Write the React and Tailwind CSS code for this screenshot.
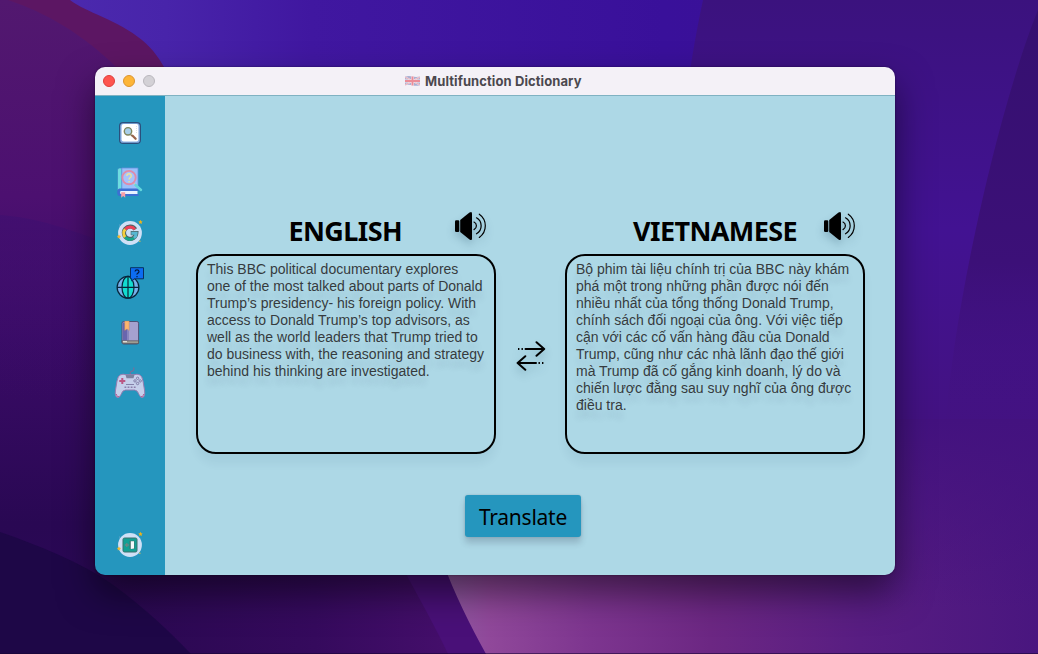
import React from "react";

const ENGLISH = [
  "This BBC political documentary explores",
  "one of the most talked about parts of Donald",
  "Trump’s presidency- his foreign policy. With",
  "access to Donald Trump’s top advisors, as",
  "well as the world leaders that Trump tried to",
  "do business with, the reasoning and strategy",
  "behind his thinking are investigated.",
];

const VIETNAMESE = [
  "Bộ phim tài liệu chính trị của BBC này khám",
  "phá một trong những phần được nói đến",
  "nhiều nhất của tổng thống Donald Trump,",
  "chính sách đối ngoại của ông. Với việc tiếp",
  "cận với các cố vấn hàng đầu của Donald",
  "Trump, cũng như các nhà lãnh đạo thế giới",
  "mà Trump đã cố gắng kinh doanh, lý do và",
  "chiến lược đằng sau suy nghĩ của ông được",
  "điều tra.",
];

function Wallpaper() {
  return (
    <svg className="absolute inset-0" width="1038" height="654" viewBox="0 0 1038 654" aria-hidden="true">
      <defs>
        <linearGradient id="sky" x1="0" y1="0" x2="1" y2="0">
          <stop offset="0" stopColor="#4d2cb0" />
          <stop offset="0.16" stopColor="#4824aa" />
          <stop offset="0.3" stopColor="#4017a0" />
          <stop offset="0.64" stopColor="#39109a" />
          <stop offset="1" stopColor="#3c1190" />
        </linearGradient>
        <linearGradient id="right" x1="0" y1="0" x2="0" y2="1">
          <stop offset="0" stopColor="#3b127e" />
          <stop offset="0.35" stopColor="#421292" />
          <stop offset="0.7" stopColor="#43127f" />
          <stop offset="1" stopColor="#49167c" />
        </linearGradient>
        <linearGradient id="edge" x1="0" y1="0" x2="0" y2="1">
          <stop offset="0" stopColor="#351070" />
          <stop offset="0.6" stopColor="#3c1078" />
          <stop offset="1" stopColor="#43127f" stopOpacity="0" />
        </linearGradient>
        <linearGradient id="left" x1="0" y1="0" x2="0" y2="1">
          <stop offset="0" stopColor="#52186f" />
          <stop offset="0.3" stopColor="#4c1070" />
          <stop offset="0.52" stopColor="#3a0b66" />
          <stop offset="0.8" stopColor="#290853" />
          <stop offset="1" stopColor="#2c0858" />
        </linearGradient>
        <linearGradient id="leftFold" x1="0" y1="0" x2="0" y2="1">
          <stop offset="0" stopColor="#3b0f70" stopOpacity="0.5" />
          <stop offset="1" stopColor="#3b0f70" stopOpacity="0" />
        </linearGradient>
        <linearGradient id="floor" x1="0" y1="0" x2="1" y2="0">
          <stop offset="0" stopColor="#28084f" />
          <stop offset="0.55" stopColor="#350a5d" />
          <stop offset="1" stopColor="#4a1070" />
        </linearGradient>
        <linearGradient id="pink" x1="0" y1="0" x2="1" y2="0">
          <stop offset="0" stopColor="#8f5aa2" />
          <stop offset="0.08" stopColor="#90489a" />
          <stop offset="0.25" stopColor="#7d358f" />
          <stop offset="0.45" stopColor="#6c2783" />
          <stop offset="0.7" stopColor="#581d82" />
          <stop offset="1" stopColor="#49167f" />
        </linearGradient>
        <linearGradient id="pinkFade" x1="0" y1="0" x2="0" y2="1">
          <stop offset="0" stopColor="#43127f" stopOpacity="1" />
          <stop offset="1" stopColor="#43127f" stopOpacity="0" />
        </linearGradient>
      </defs>
      <rect width="1038" height="654" fill="url(#sky)" />
      <path d="M703 0H1038V654H640C660 400 670 150 703 0Z" fill="url(#right)" />
      <path d="M1038 10V430H945C955 290 1005 90 1038 10Z" fill="url(#edge)" />
      <path d="M0 0H70C85 12 118 20 142 40C154 50 160 60 164 67V300H0Z" fill="#5c1663" />
      <path d="M0 0H8C45 12 84 35 116 67L300 280V654H0Z" fill="url(#left)" />
      <path d="M0 215C40 218 70 230 110 244V400H0Z" fill="url(#leftFold)" />
      <rect x="95" y="540" width="400" height="114" fill="url(#floor)" />
      <path d="M404 570C420 600 436 628 448 654H500V560Z" fill="#491078" />
      <path d="M0 532C40 546 80 562 112 584C145 608 170 632 191 654H0Z" fill="#1e0747" />
      <path d="M442 560C455 595 470 625 486 654H1038V420H880V560Z" fill="url(#pink)" />
      <rect x="880" y="419" width="158" height="190" fill="url(#pinkFade)" />
      <rect y="653" width="1038" height="1" fill="#160633" opacity="0.55" />
    </svg>
  );
}

function Flag() {
  return (
    <svg width="15" height="10" viewBox="0 0 15 10" className="opacity-60" aria-hidden="true">
      <path d="M0 .5Q4 -.4 7.500 .5T15 .5V9.300Q11 10.300 7.500 9.300T0 9.300Z" fill="#7a82b8" />
      <path d="M0 1 15 9M15 1 0 9" stroke="#efe6f0" strokeWidth="1.500" />
      <path d="M0 1 15 9M15 1 0 9" stroke="#e0606c" strokeWidth="0.800" />
      <path d="M7.500 0.300V9.700M0 5H15" stroke="#f6e3ea" strokeWidth="2.800" />
      <path d="M7.500 .5V9.500M0 5H15" stroke="#e64a58" strokeWidth="1.900" />
    </svg>
  );
}

function Icon({ children }) {
  return (
    <svg width="36" height="36" viewBox="0 0 36 36" fill="none" aria-hidden="true">
      {children}
    </svg>
  );
}

const Sparkles = () => (
  <>
    <path d="m28.500 4.800 .7 1.400 1.500.2-1.100 1.100.3 1.500-1.400-.7-1.400.7.3-1.500-1.100-1.100 1.500-.2Z" fill="#f0b416" />
    <path d="m7 19.500.7 1.300 1.400.2-1 1 .2 1.400-1.300-.7-1.300.7.2-1.400-1-1 1.400-.2Z" fill="#f4b92c" />
    <circle cx="27.800" cy="26.300" r="0.800" fill="#d9bb4a" />
    <circle cx="7.500" cy="10" r="0.600" fill="#6fa8cf" />
  </>
);

const SearchIcon = () => (
  <Icon>
    <rect x="7.600" y="7.600" width="20.800" height="20.800" rx="3.500" fill="#8bb0e4" stroke="#2a4f7c" strokeWidth="1.200" />
    <rect x="9.600" y="9" width="16.800" height="17.400" rx="2" fill="#fff" />
    <path d="m18.500 19.500 2 1.700" stroke="#7d7254" strokeWidth="1.300" />
    <path d="m20.600 20.800 3 3" stroke="#99654d" strokeWidth="2.300" strokeLinecap="round" />
    <circle cx="16" cy="16.300" r="3.700" fill="#a8cfe9" stroke="#808760" strokeWidth="1.400" />
    <path d="M24.500 11v7" stroke="#d8dfe9" strokeDasharray="1 1" />
  </Icon>
);

const BookSearchIcon = () => (
  <Icon>
    <path d="M5.500 5Q5.500 3 7.500 3H10V25H5.500Z" fill="#6ddde0" stroke="#398bc2" strokeWidth="0.700" />
    <path d="M9.800 3H26V25H9.800Z" fill="#9bc0fa" stroke="#638fdc" strokeWidth="0.800" />
    <path d="M7.500 23.500H26.500V26H8Q7 28 8.500 29H26.500V31H8Q5.200 31 5.200 27.500T7.500 23.500Z" fill="#3d6fd3" />
    <path d="M8.500 26H25.500V29H8.500Q7.500 27.500 8.500 26Z" fill="#e8f1ff" />
    <path d="M9.200 27.300h4V32.800l-2-1.700-2 1.700Z" fill="#f79fa8" />
    <path d="m21.500 18 2 2" stroke="#d9cbad" strokeWidth="1.500" />
    <path d="m23.500 20 5.500 5" stroke="#62d6dc" strokeWidth="2.500" strokeLinecap="round" />
    <circle cx="17" cy="12.600" r="6.700" fill="#a7c3fb" stroke="#df8bab" strokeWidth="1.900" />
    <path d="M14.800 11Q15 8.800 17 8.800T19.300 11Q19.300 12 18.200 12.600T17.100 14.600M17.100 16v1.200" stroke="#e8e39d" strokeWidth="1.400" />
  </Icon>
);

const GoogleIcon = () => (
  <Icon>
    <circle cx="18" cy="18" r="11.900" fill="#cfe0f6" />
    <path d="M23.300 14.300A6.200 6.200 0 1 0 24.300 18.200H18.700" stroke="#4c6468" strokeWidth="4.200" />
    <g strokeWidth="2.900">
      <path d="M22.900 14.500A6.200 6.200 0 0 0 13.200 14.200" stroke="#ed4058" />
      <path d="M13.200 14.200A6.200 6.200 0 0 0 13.200 22.200" stroke="#f6cf3d" />
      <path d="M13.200 22.200A6.200 6.200 0 0 0 22 23" stroke="#16a58b" />
      <path d="M19.300 18.200H24.200A6.200 6.200 0 0 1 22 23" stroke="#57b7d2" />
    </g>
    <Sparkles />
  </Icon>
);

const GlobeIcon = () => (
  <Icon>
    <circle cx="16" cy="22.300" r="10.900" fill="#76b0ea" />
    <ellipse cx="16" cy="22.300" rx="6" ry="10.900" fill="#12dcd0" />
    <g stroke="#08263b" strokeWidth="1.200">
      <circle cx="16" cy="22.300" r="10.900" />
      <ellipse cx="16" cy="22.300" rx="6" ry="10.900" />
      <path d="M16 11.500v21.600M5 22.300h22" />
    </g>
    <path d="M18.500 2.700H31.500V13.800H22.200L19.700 16V13.800H18.500Z" fill="#0c6cf2" stroke="#083060" strokeWidth="1" />
    <path d="M23 6.500Q23.200 4.800 25 4.800T27 6.500Q27 7.600 25.900 8.100T25 9.600M25 11v1.200" stroke="#041a3d" strokeWidth="1.200" />
  </Icon>
);

const BookIcon = () => (
  <Icon>
    <rect x="10" y="6.500" width="16.600" height="22.500" rx="1.700" fill="#a5a1cf" stroke="#4b4a6c" strokeWidth="0.900" />
    <path d="M10.800 7.500H15.500V25.500H10.800Z" fill="#6865ae" />
    <path d="M15.500 15.500V25.500H17V15.500Z" fill="#8885bf" />
    <path d="M10 25.800H26.500V28.500H12Q10 28.500 10 27Z" fill="#9e9d94" stroke="#555458" strokeWidth="0.700" />
    <path d="M11 26.700h4" stroke="#f3efe6" strokeWidth="1" />
    <path d="M12.700 6.100H17.200V15.500L15 14 12.700 15.500Z" fill="#fdb56e" stroke="#b18067" strokeWidth="0.400" />
  </Icon>
);

const GamepadIcon = () => (
  <Icon>
    <path d="M18.300 10V7.500Q18.300 6.300 20 6.200T21.800 4.500V2.500" stroke="#95628f" strokeWidth="0.900" />
    <path d="M8 10Q11 8.500 14 9.700H22Q25 8.500 28 10Q30 11 31 16L32.500 25Q33.500 32 30.500 32.500Q28.500 33 27 29.500Q25.500 25 22.500 25H13.500Q10.500 25 9 29.500Q7.500 33 5.500 32.500Q2.500 32 3.500 25L5 16Q6 11 8 10Z" fill="#c5cfeb" stroke="#967eb2" strokeWidth="1" />
    <path d="M13.500 9.800H22.500L21.500 13.300H14.500Z" fill="#7b819f" />
    <path d="M10.300 13v6M7.300 16h6" stroke="#ba5784" strokeWidth="2" />
    <g stroke="#746d99" strokeWidth="0.800">
      <circle cx="25.600" cy="13.300" r="1.200" />
      <circle cx="25.600" cy="18.500" r="1.200" />
      <circle cx="23" cy="15.900" r="1.200" />
      <circle cx="28.200" cy="15.900" r="1.200" />
      <path d="M14 19.500h8" />
    </g>
    <path d="M12.500 22.300h11.500" stroke="#8c7eaa" strokeWidth="1.500" strokeDasharray="1.800 1.300" />
    <path d="M4.300 29Q5 33 7 31.500M31.700 29Q31 33 29 31.500" stroke="#b2598f" strokeWidth="0.900" />
  </Icon>
);

const ExitIcon = () => (
  <Icon>
    <circle cx="18" cy="18" r="11.900" fill="#cfe0f6" />
    <rect x="11" y="11" width="14" height="14" rx="1.500" fill="#13a094" stroke="#3c706c" strokeWidth="1" />
    <path d="M12.800 18h4M14.800 16v4" stroke="#6f8583" strokeWidth="1.300" />
    <path d="M17.500 13.700H22.500V22H17.500Z" fill="#42736e" />
    <path d="M18.800 14.300H22V21.500L18.800 22Z" fill="#f4fafc" />
    <Sparkles />
  </Icon>
);

function Speaker() {
  return (
    <svg width="34" height="30" viewBox="0 0 34 30" fill="none" className="drop-shadow-[0_5px_4px_rgba(0,40,70,0.22)]" aria-hidden="true">
      <rect x="1" y="9.300" width="4.300" height="11.600" rx="1.200" fill="#000" />
      <path d="M6.200 9 15.500 1.600Q18 0 18 2.500V27.500Q18 30 15.500 28.400L6.200 21Z" fill="#000" />
      <g stroke="#000" strokeWidth="1.200" strokeLinecap="round">
        <path d="M20 11A4.200 4.200 0 0 1 20 18.600" />
        <path d="M22.500 6.800A9.200 9.200 0 0 1 22.500 22.800" />
        <path d="M25.300 3.200A14.200 14.200 0 0 1 25.300 26.400" />
      </g>
    </svg>
  );
}

function SwapArrows() {
  return (
    <svg width="30" height="30" viewBox="0 0 30 30" fill="none" stroke="#000" strokeWidth="2" strokeLinecap="round" strokeLinejoin="round" className="drop-shadow-[0_5px_4px_rgba(0,40,70,0.22)]" aria-hidden="true">
      <path d="M9.500 8H28M20.500 1.200 28.200 8 20.500 14.800" />
      <path d="M20 22H2M9.300 15.200 1.600 22 9.300 28.800" />
      <path d="M2 8h1.400M5.500 8h1.400M22.500 22h1.400M26 22h1.400" strokeLinecap="butt" />
    </svg>
  );
}

function Panel({ title, titleClass, lines }) {
  return (
    <section className="w-[300px]">
      <div className="flex h-[49px] items-start">
        <h2 className={"mt-2 h-9 whitespace-nowrap text-right font-['Comic_Sans_MS','Noto_Sans',sans-serif] text-[27px] leading-9 font-bold tracking-[-0.6px] text-black " + titleClass}>
          {title}
        </h2>
        <button className="ml-auto mr-2 mt-1.5" aria-label="Play">
          <Speaker />
        </button>
      </div>
      <div className="h-[200px] rounded-[20px] border-2 border-black pl-[9px] pt-[5px] shadow-[0_9px_10px_rgba(0,50,80,0.06)]">
        <div className="font-['Liberation_Sans',Arial,sans-serif] text-[14px] leading-[17px] text-[#363b3e] [text-shadow:0_9px_6px_rgba(0,40,70,0.1)]">
          {lines.map((line) => (
            <p key={line} className="whitespace-nowrap">{line}</p>
          ))}
        </div>
      </div>
    </section>
  );
}

export default function App() {
  return (
    <div className="relative h-[654px] w-[1038px] overflow-hidden bg-[#2c0858] pl-[95px] pt-[67px]">
      <Wallpaper />
      <div className="relative flex h-[508px] w-[800px] flex-col overflow-hidden rounded-[10px] shadow-[0_18px_36px_rgba(0,0,0,0.5),0_0_2px_rgba(0,0,0,0.5)]">
        <header className="flex h-[29px] shrink-0 items-center border-b border-[#7fb2c2] bg-[#f4f1f7] pl-2">
          <div className="flex gap-2">
            <span className="size-3 rounded-full border border-[#de3e3b] bg-[#fe554f]" />
            <span className="size-3 rounded-full border border-[#db9430] bg-[#fdb538]" />
            <span className="size-3 rounded-full border border-[#b9b7bd] bg-[#d3d1d6]" />
          </div>
          <div className="ml-[250px] flex items-center gap-[5px] pb-px">
            <Flag />
            <h1 className="whitespace-nowrap font-['Inter',sans-serif] text-[13px] leading-4 font-bold tracking-[0.09px] text-[#4b484e]">Multifunction Dictionary</h1>
          </div>
        </header>
        <div className="flex min-h-0 flex-1">
          <nav className="flex w-[70px] flex-col items-center bg-[#2596be] pb-[5px] pt-3">
            {[SearchIcon, BookSearchIcon, GoogleIcon, GlobeIcon, BookIcon, GamepadIcon].map((Item, i) => (
              <button key={i} className="flex h-[50px] w-full items-center justify-center">
                <Item />
              </button>
            ))}
            <button className="mt-auto flex h-[50px] w-full items-center justify-center">
              <ExitIcon />
            </button>
          </nav>
          <main className="flex-1 bg-[#add8e6] pt-[109px]">
            <div className="flex pl-[31px]">
              <Panel title="ENGLISH" titleClass="w-[206px]" lines={ENGLISH} />
              <button className="mt-[136px] flex h-[30px] w-[69px] justify-center" aria-label="Swap languages">
                <SwapArrows />
              </button>
              <Panel title="VIETNAMESE" titleClass="w-[232px]" lines={VIETNAMESE} />
            </div>
            <button className="ml-[300px] mt-[41px] flex h-[42px] w-[116px] items-center justify-center rounded-[3px] bg-[#2596be] pt-[3px] font-['Comic_Sans_MS','Noto_Sans',sans-serif] text-[21px] tracking-[-0.25px] text-black shadow-[0_6px_6px_rgba(50,60,80,0.22),0_0_2px_rgba(50,60,80,0.25)]">
              Translate
            </button>
          </main>
        </div>
      </div>
    </div>
  );
}
